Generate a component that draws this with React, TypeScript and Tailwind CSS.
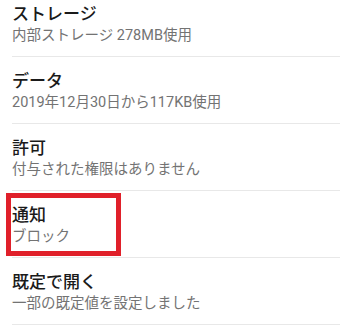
const items = [
  { title: "ストレージ", summary: "内部ストレージ 278MB使用" },
  { title: "データ", summary: "2019年12月30日から117KB使用" },
  { title: "許可", summary: "付与された権限はありません" },
  { title: "通知", summary: "ブロック", marked: true },
  { title: "既定で開く", summary: "一部の既定値を設定しました" },
]

export default function App() {
  return (
    <div
      className="h-[328px] w-[340px] overflow-hidden bg-white"
      style={{ fontFamily: 'Roboto, "Noto Sans CJK JP", "Noto Sans", sans-serif' }}
    >
      <div className="-mt-[10px]">
        {items.map((item) => (
          <div key={item.title} className="relative pl-3">
            <div className="border-b border-[#e8e8e8] pt-3 pb-[10px]">
              <div className="text-[17px] font-medium leading-6 text-[#1a1a1a]">{item.title}</div>
              <div className="text-[14.5px] leading-5 text-[#737373]">{item.summary}</div>
            </div>
            {item.marked && (
              <div className="absolute left-[6px] top-[2px] h-[63px] w-[115px] border-[5px] border-[#e0202a]" />
            )}
          </div>
        ))}
      </div>
    </div>
  )
}
